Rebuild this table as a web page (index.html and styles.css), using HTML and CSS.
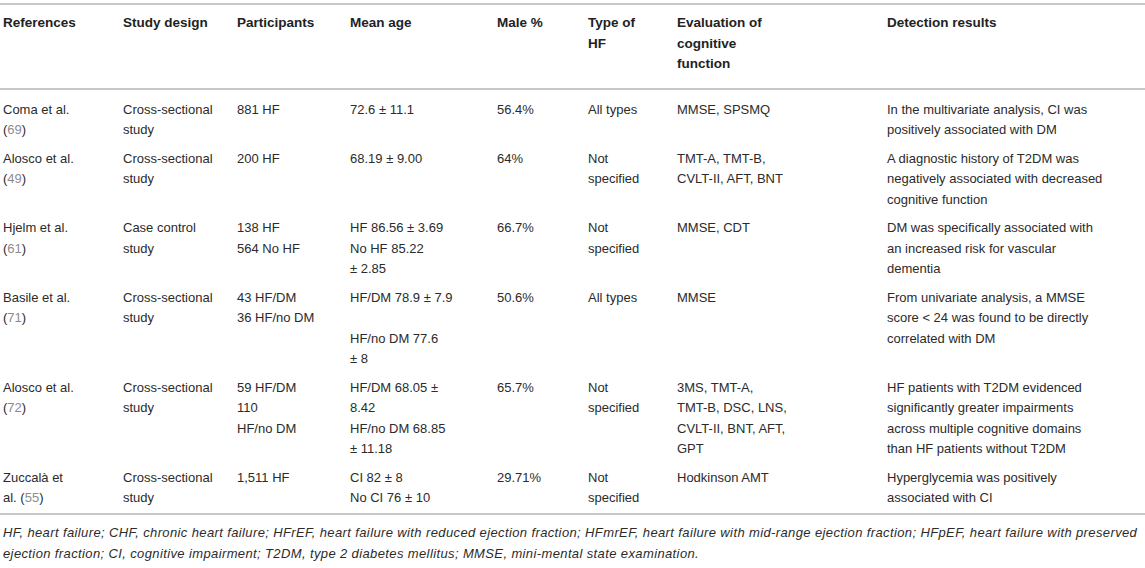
FILE: index.html
```html
<!DOCTYPE html>
<html lang="en">
<head>
<meta charset="utf-8">
<title>Table</title>
<link rel="stylesheet" href="styles.css">
</head>
<body class="page">
<table class="data-table">
  <colgroup>
    <col class="c-ref">
    <col class="c-design">
    <col class="c-part">
    <col class="c-age">
    <col class="c-male">
    <col class="c-type">
    <col class="c-eval">
    <col class="c-res">
  </colgroup>
  <thead class="head">
    <tr>
      <th class="hcell">References</th>
      <th class="hcell">Study design</th>
      <th class="hcell">Participants</th>
      <th class="hcell">Mean age</th>
      <th class="hcell">Male %</th>
      <th class="hcell">Type of<br>HF</th>
      <th class="hcell">Evaluation of<br>cognitive<br>function</th>
      <th class="hcell">Detection results</th>
    </tr>
  </thead>
  <tbody class="body">
    <tr class="row">
      <td class="cell">Coma et al.<br>(<span class="ref">69</span>)</td>
      <td class="cell">Cross-sectional<br>study</td>
      <td class="cell">881 HF</td>
      <td class="cell">72.6 ± 11.1</td>
      <td class="cell">56.4%</td>
      <td class="cell">All types</td>
      <td class="cell">MMSE, SPSMQ</td>
      <td class="cell">In the multivariate analysis, CI was<br>positively associated with DM</td>
    </tr>
    <tr class="row">
      <td class="cell">Alosco et al.<br>(<span class="ref">49</span>)</td>
      <td class="cell">Cross-sectional<br>study</td>
      <td class="cell">200 HF</td>
      <td class="cell">68.19 ± 9.00</td>
      <td class="cell">64%</td>
      <td class="cell">Not<br>specified</td>
      <td class="cell">TMT-A, TMT-B,<br>CVLT-II, AFT, BNT</td>
      <td class="cell">A diagnostic history of T2DM was<br>negatively associated with decreased<br>cognitive function</td>
    </tr>
    <tr class="row">
      <td class="cell">Hjelm et al.<br>(<span class="ref">61</span>)</td>
      <td class="cell">Case control<br>study</td>
      <td class="cell">138 HF<br>564 No HF</td>
      <td class="cell">HF 86.56 ± 3.69<br>No HF 85.22<br>± 2.85</td>
      <td class="cell">66.7%</td>
      <td class="cell">Not<br>specified</td>
      <td class="cell">MMSE, CDT</td>
      <td class="cell">DM was specifically associated with<br>an increased risk for vascular<br>dementia</td>
    </tr>
    <tr class="row">
      <td class="cell">Basile et al.<br>(<span class="ref">71</span>)</td>
      <td class="cell">Cross-sectional<br>study</td>
      <td class="cell">43 HF/DM<br>36 HF/no DM</td>
      <td class="cell">HF/DM 78.9 ± 7.9<br><br>HF/no DM 77.6<br>± 8</td>
      <td class="cell">50.6%</td>
      <td class="cell">All types</td>
      <td class="cell">MMSE</td>
      <td class="cell">From univariate analysis, a MMSE<br>score &lt; 24 was found to be directly<br>correlated with DM</td>
    </tr>
    <tr class="row">
      <td class="cell">Alosco et al.<br>(<span class="ref">72</span>)</td>
      <td class="cell">Cross-sectional<br>study</td>
      <td class="cell">59 HF/DM<br>110<br>HF/no DM</td>
      <td class="cell">HF/DM 68.05 ±<br>8.42<br>HF/no DM 68.85<br>± 11.18</td>
      <td class="cell">65.7%</td>
      <td class="cell">Not<br>specified</td>
      <td class="cell">3MS, TMT-A,<br>TMT-B, DSC, LNS,<br>CVLT-II, BNT, AFT,<br>GPT</td>
      <td class="cell">HF patients with T2DM evidenced<br>significantly greater impairments<br>across multiple cognitive domains<br>than HF patients without T2DM</td>
    </tr>
    <tr class="row">
      <td class="cell">Zuccalà et<br>al. (<span class="ref">55</span>)</td>
      <td class="cell">Cross-sectional<br>study</td>
      <td class="cell">1,511 HF</td>
      <td class="cell">CI 82 ± 8<br>No CI 76 ± 10</td>
      <td class="cell">29.71%</td>
      <td class="cell">Not<br>specified</td>
      <td class="cell">Hodkinson AMT</td>
      <td class="cell">Hyperglycemia was positively<br>associated with CI</td>
    </tr>
  </tbody>
</table>
<p class="footnote">HF, heart failure; CHF, chronic heart failure; HFrEF, heart failure with reduced ejection fraction; HFmrEF, heart failure with mid-range ejection fraction; HFpEF, heart failure with preserved<br>ejection fraction; CI, cognitive impairment; T2DM, type 2 diabetes mellitus; MMSE, mini-mental state examination.</p>
</body>
</html>
```

FILE: styles.css
```css
.page {
  margin: 0;
  background: #ffffff;
  font-family: "Liberation Sans", Arial, Helvetica, sans-serif;
  font-size: 13px;
  color: #2b2b2b;
}

.data-table {
  width: 1145px;
  margin-top: 3px;
  border-collapse: collapse;
  table-layout: fixed;
  border-top: 2px solid #c8c8c8;
  border-bottom: 2px solid #c8c8c8;
}

.c-ref { width: 120px; }
.c-design { width: 114px; }
.c-part { width: 113px; }
.c-age { width: 147px; }
.c-male { width: 91px; }
.c-type { width: 89px; }
.c-eval { width: 210px; }
.c-res { width: 261px; }

.head {
  border-bottom: 2px solid #c8c8c8;
}

.hcell {
  text-align: left;
  vertical-align: top;
  font-weight: bold;
  font-size: 13.5px;
  line-height: 20.5px;
  padding: 8px 3px 13px;
  white-space: nowrap;
  color: #222222;
}

.cell {
  vertical-align: top;
  line-height: 20.5px;
  padding: 4px 3px;
  white-space: nowrap;
}

.body .row:first-child .cell {
  padding-top: 10px;
}

.ref {
  color: #8c8c8c;
}

.footnote {
  margin: 7px 0 0;
  padding: 0 3px;
  font-style: italic;
  line-height: 21px;
  letter-spacing: 0.38px;
  color: #2b2b2b;
  white-space: nowrap;
}
```
